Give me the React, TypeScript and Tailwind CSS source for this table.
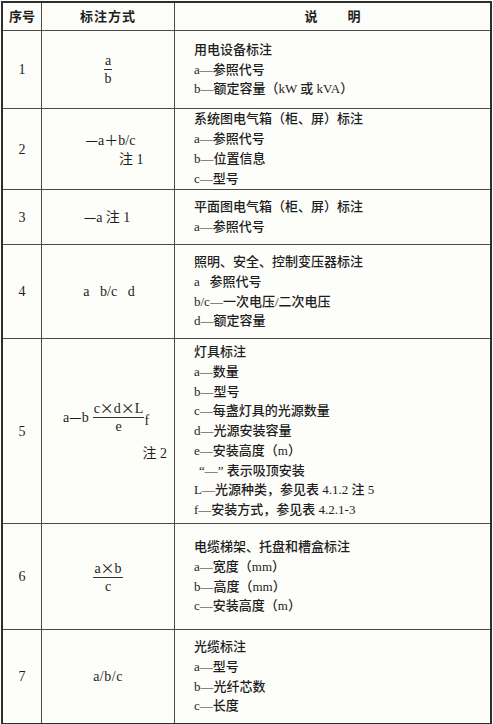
import React from "react";

const font = { fontFamily: '"Liberation Serif", "Noto Sans CJK SC", serif' };

// symbols drawn with the CJK face so they come out full width, like the print
const C = ({ children }: { children: React.ReactNode }) => (
  <span style={{ fontFamily: '"Noto Sans CJK SC", sans-serif' }}>{children}</span>
);

const Frac = ({ top, bottom }: { top: React.ReactNode; bottom: React.ReactNode }) => (
  <span className="inline-flex flex-col items-center align-middle leading-[17px]">
    <span className="border-b border-[#333] px-[1px] leading-[16px]">{top}</span>
    <span>{bottom}</span>
  </span>
);

interface Row {
  no: string;
  h: string;
  mark: React.ReactNode;
  lines: React.ReactNode[];
}

const rows: Row[] = [
  {
    no: "1",
    h: "h-[78px]",
    mark: <Frac top="a" bottom="b" />,
    lines: ["用电设备标注", "a—参照代号", "b—额定容量（kW 或 kVA）"],
  },
  {
    no: "2",
    h: "h-[81px]",
    mark: (
      <div className="flex flex-col items-end leading-[19px] ml-[5px]">
        <span>
          <C>—</C>a<C>＋</C>b/c
        </span>
        <span className="-mr-[8px]">注 1</span>
      </div>
    ),
    lines: ["系统图电气箱（柜、屏）标注", "a—参照代号", "b—位置信息", "c—型号"],
  },
  {
    no: "3",
    h: "h-[55px]",
    mark: (
      <span className="mr-[2px]">
        <C>—</C>a 注 1
      </span>
    ),
    lines: ["平面图电气箱（柜、屏）标注", "a—参照代号"],
  },
  {
    no: "4",
    h: "h-[94px]",
    mark: <span className="whitespace-pre ml-[2px]">a   b/c   d</span>,
    lines: [
      "照明、安全、控制变压器标注",
      <span className="whitespace-pre">a   参照代号</span>,
      "b/c—一次电压/二次电压",
      "d—额定容量",
    ],
  },
  {
    no: "5",
    h: "h-[185px]",
    mark: (
      <div className="flex flex-col items-end ml-[14px]">
        <div className="flex items-center mr-[18px]">
          <span className="mr-[4px]">
            a<C>—</C>b
          </span>
          <Frac
            top={
              <>
                c<C>×</C>d<C>×</C>L
              </>
            }
            bottom="e"
          />
          <span className="mt-[8px]">f</span>
        </div>
        <span className="mt-[8px]">注 2</span>
      </div>
    ),
    lines: [
      "灯具标注",
      "a—数量",
      "b—型号",
      "c—每盏灯具的光源数量",
      "d—光源安装容量",
      "e—安装高度（m）",
      <span className="pl-[5px]">“—” 表示吸顶安装</span>,
      "L—光源种类，参见表 4.1.2 注 5",
      "f—安装方式，参见表 4.2.1-3",
    ],
  },
  {
    no: "6",
    h: "h-[106px]",
    mark: (
      <Frac
        top={
          <>
            a<C>×</C>b
          </>
        }
        bottom="c"
      />
    ),
    lines: ["电缆梯架、托盘和槽盒标注", "a—宽度（mm）", "b—高度（mm）", "c—安装高度（m）"],
  },
  {
    no: "7",
    h: "h-[93px]",
    mark: <span className="tracking-[0.5px]">a/b/c</span>,
    lines: ["光缆标注", "a—型号", "b—光纤芯数", "c—长度"],
  },
];

export default function App() {
  return (
    <div className="w-[493px] h-[724px] bg-[#fdfdfa] pt-[1px] pl-[1px]" style={font}>
      <div className="w-[491px] border-2 border-[#2e2e2e] text-[13px] text-[#1e1e1e]">
        {/* header */}
        <div className="flex h-[28px] border-b border-[#4a4a48] font-bold">
          <div className="w-[39px] border-r border-[#4a4a48] flex items-center justify-center">序号</div>
          <div className="w-[133px] border-r border-[#4a4a48] flex items-center justify-center tracking-[1px]">
            标注方式
          </div>
          <div className="flex-1 flex items-center justify-center">
            <span>说</span>
            <span className="ml-[30px]">明</span>
          </div>
        </div>

        {rows.map((r, i) => (
          <div
            key={r.no}
            className={`flex ${r.h} ${i < rows.length - 1 ? "border-b border-[#4a4a48]" : ""}`}
          >
            <div className="w-[39px] border-r border-[#4a4a48] flex items-center justify-center text-[14px]">
              {r.no}
            </div>
            <div className="w-[133px] border-r border-[#4a4a48] flex items-center justify-center text-[14px]">
              {r.mark}
            </div>
            <div className="flex-1 flex flex-col justify-center pl-[19px] leading-[19.8px] font-medium">
              {r.lines.map((l, j) => (
                <div key={j}>{l}</div>
              ))}
            </div>
          </div>
        ))}
      </div>
    </div>
  );
}
